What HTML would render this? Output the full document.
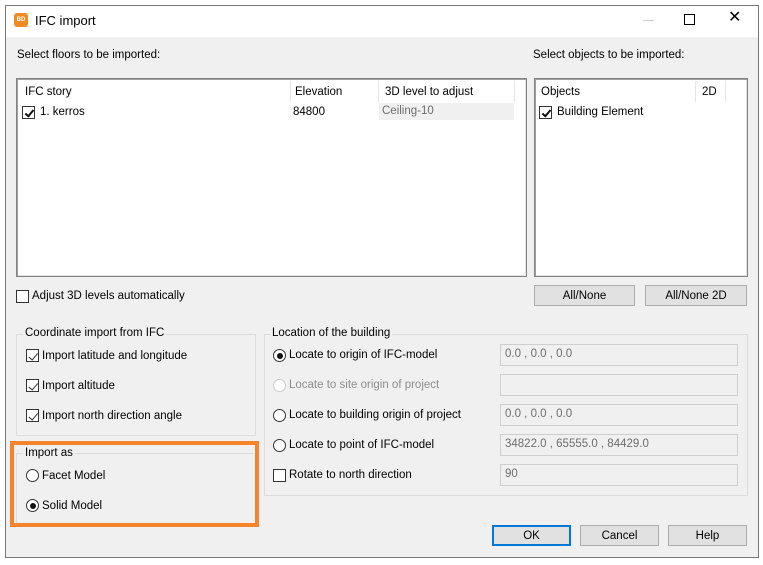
<!DOCTYPE html><html><head><style>
*{box-sizing:border-box}
body{margin:0;width:763px;height:565px;background:#fff;font-family:"Liberation Sans",sans-serif;font-size:11.5px;line-height:17px;color:#000;position:relative;overflow:hidden}
.a{position:absolute}
.win{left:5px;top:5px;width:754px;height:553px;border:1px solid #777;background:#f0f0f0}
.title{left:6px;top:6px;width:752px;height:31px;background:#fff}
.list{background:#fff;border:1px solid #828282;box-shadow:inset 1px 1px 0 #a0a0a0,inset -1px -1px 0 #e3e3e3}
.cb{width:13px;height:13px;border:1px solid #333;background:#fff}
.cbc::after{content:"";position:absolute;left:3.5px;top:1px;width:3px;height:7px;border:solid #111;border-width:0 2px 2px 0;transform:rotate(40deg)}
.cbg{border-color:#333}
.cbg::after{content:"";position:absolute;left:3.5px;top:0.5px;width:3.5px;height:7.5px;border:solid #333;border-width:0 1.5px 1.5px 0;transform:rotate(40deg)}
.rb{width:13px;height:13px;border:1px solid #333;border-radius:50%;background:#fff}
.rbs::after{content:"";position:absolute;left:2.5px;top:2.5px;width:6px;height:6px;border-radius:50%;background:#111}
.grp{border:1px solid #dcdcdc}
.lg{background:#f0f0f0;padding:0 2px}
.tb{border:1px solid #cfcfcf;background:#f0f0f0;color:#6d6d6d;padding:1px 0 0 4px;height:22px;width:238px;left:500px}
.btn{background:#e1e1e1;border:1px solid #adadad;height:21px;text-align:center;line-height:21px}
</style></head><body>
<div class="a win"></div>
<div class="a title"></div>
<div class="a" style="left:14px;top:13px;width:14px;height:14px;background:#f08a24;border-radius:3px;color:#fff;font-size:6px;font-weight:bold;text-align:center;line-height:14px">BD</div>
<div class="a" style="left:35px;top:12px;font-size:13px">IFC import</div>
<div class="a" style="left:643px;top:20px;width:11px;height:1px;background:#ccc"></div>
<div class="a" style="left:684px;top:14px;width:11px;height:11px;border:1px solid #000"></div>
<div class="a" style="left:728px;top:9px;font-size:16px">✕</div>

<div class="a" style="left:17px;top:47px">Select floors to be imported:</div>
<div class="a" style="left:533px;top:47px">Select objects to be imported:</div>

<div class="a list" style="left:16px;top:78px;width:511px;height:199px"></div>
<div class="a" style="left:290px;top:81px;width:1px;height:21px;background:#e5e5e5"></div>
<div class="a" style="left:378px;top:81px;width:1px;height:21px;background:#e5e5e5"></div>
<div class="a" style="left:514px;top:81px;width:1px;height:21px;background:#e5e5e5"></div>
<div class="a" style="left:25px;top:84px">IFC story</div>
<div class="a" style="left:295px;top:84px">Elevation</div>
<div class="a" style="left:385px;top:84px">3D level to adjust</div>
<div class="a cb cbc" style="left:22px;top:106px"></div>
<div class="a" style="left:40px;top:104px">1. kerros</div>
<div class="a" style="left:293px;top:104px">84800</div>
<div class="a" style="left:379px;top:103px;width:135px;height:17px;background:#f0f0f0;color:#6d6d6d;padding:0 0 0 3px">Ceiling-10</div>

<div class="a list" style="left:534px;top:78px;width:214px;height:199px"></div>
<div class="a" style="left:695px;top:81px;width:1px;height:21px;background:#e5e5e5"></div>
<div class="a" style="left:725px;top:81px;width:1px;height:21px;background:#e5e5e5"></div>
<div class="a" style="left:541px;top:84px">Objects</div>
<div class="a" style="left:702px;top:84px">2D</div>
<div class="a cb cbc" style="left:539px;top:106px"></div>
<div class="a" style="left:557px;top:104px">Building Element</div>

<div class="a cb" style="left:16px;top:290px"></div>
<div class="a" style="left:32px;top:288px">Adjust 3D levels automatically</div>
<div class="a btn" style="left:534px;top:285px;width:101px">All/None</div>
<div class="a btn" style="left:645px;top:285px;width:102px">All/None 2D</div>

<div class="a grp" style="left:16px;top:334px;width:240px;height:102px"></div>
<div class="a lg" style="left:23px;top:325px">Coordinate import from IFC</div>
<div class="a cb cbg" style="left:26px;top:349px"></div><div class="a" style="left:42px;top:348px">Import latitude and longitude</div>
<div class="a cb cbg" style="left:26px;top:379px"></div><div class="a" style="left:42px;top:378px">Import altitude</div>
<div class="a cb cbg" style="left:26px;top:409px"></div><div class="a" style="left:42px;top:408px">Import north direction angle</div>

<div class="a" style="left:10px;top:441px;width:249px;height:86px;border:4px solid #f5842a"></div>
<div class="a grp" style="left:16px;top:453px;width:238px;height:70px;border-right:none;border-bottom:none"></div>
<div class="a lg" style="left:23px;top:445px">Import as</div>
<div class="a rb" style="left:26px;top:469px"></div><div class="a" style="left:42px;top:468px">Facet Model</div>
<div class="a rb rbs" style="left:26px;top:499px"></div><div class="a" style="left:42px;top:498px">Solid Model</div>

<div class="a grp" style="left:264px;top:334px;width:484px;height:162px"></div>
<div class="a lg" style="left:270px;top:325px">Location of the building</div>
<div class="a rb rbs" style="left:273px;top:349px"></div><div class="a" style="left:289px;top:347px">Locate to origin of IFC-model</div>
<div class="a tb" style="top:344px">0.0 , 0.0 , 0.0</div>
<div class="a rb" style="left:273px;top:379px;border-color:#ccc"></div><div class="a" style="left:289px;top:377px;color:#8d8d8d">Locate to site origin of project</div>
<div class="a tb" style="top:374px"></div>
<div class="a rb" style="left:273px;top:409px"></div><div class="a" style="left:289px;top:407px">Locate to building origin of project</div>
<div class="a tb" style="top:404px">0.0 , 0.0 , 0.0</div>
<div class="a rb" style="left:273px;top:439px"></div><div class="a" style="left:289px;top:437px">Locate to point of IFC-model</div>
<div class="a tb" style="top:434px">34822.0 , 65555.0 , 84429.0</div>
<div class="a cb" style="left:273px;top:469px"></div><div class="a" style="left:289px;top:467px">Rotate to north direction</div>
<div class="a tb" style="top:464px">90</div>

<div class="a btn" style="left:492px;top:525px;width:79px;border:2px solid #0078d7;line-height:19px">OK</div>
<div class="a btn" style="left:580px;top:525px;width:79px">Cancel</div>
<div class="a btn" style="left:668px;top:525px;width:79px">Help</div>
</body></html>
